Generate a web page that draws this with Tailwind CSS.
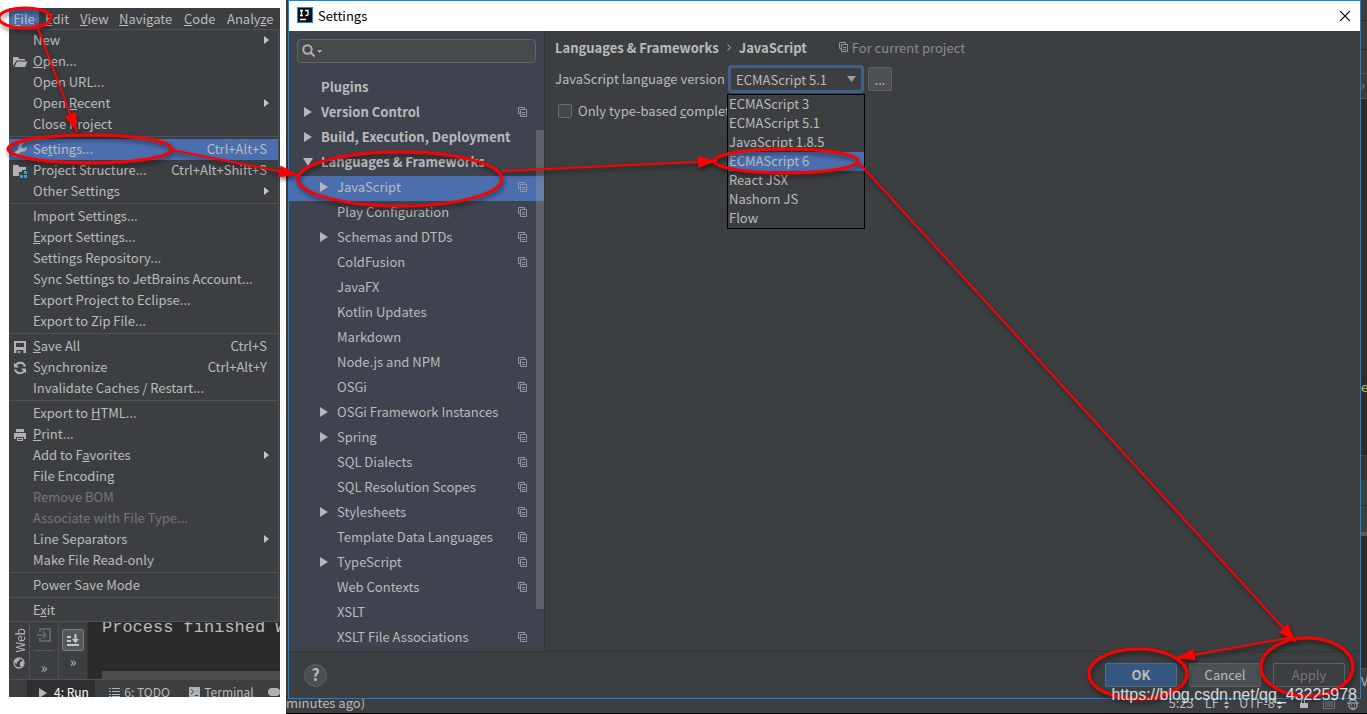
<!DOCTYPE html>
<html lang="en">
<head>
<meta charset="utf-8">
<title>Settings</title>
<script src="https://cdn.jsdelivr.net/npm/@tailwindcss/browser@4"></script>
</head>
<body class="relative flex min-h-screen overflow-hidden bg-white font-['Noto_Sans_CJK_SC','Noto_Sans',sans-serif] text-[13px] leading-[21px] text-[#bbbbbb]">

<svg class="hidden" aria-hidden="true">
  <symbol id="folder" viewBox="0 0 16 16"><path fill="#afb1b3" d="M1 12V3h5l1.500 2H13v1.500H4.500zM2.500 13L5 7.500h10.500L13 13z"/></symbol>
  <symbol id="wrench" viewBox="0 0 16 16"><path fill="#afb1b3" d="M14.500 4.200l-2.300 2.200-2.300-.4-.5-2.300 2.300-2.200a4.200 4.200 0 0 0-5.300 5.400L1.300 12a1.800 1.800 0 0 0 2.600 2.600l5.200-5.100a4.200 4.200 0 0 0 5.400-5.300z"/></symbol>
  <symbol id="structure" viewBox="0 0 16 16"><path fill="#afb1b3" d="M1 13V2h5l1.500 2H14v3H10v2H7v4z"/><path fill="#389fd6" d="M12 8h3v3h-3zM8 12h3v3H8zM12 12h3v3h-3z"/></symbol>
  <symbol id="save" viewBox="0 0 16 16"><path fill="#afb1b3" fill-rule="evenodd" d="M2 2h12v12h-2.500v-3h-7v3H2zM4 4v4h8V4zM6 12h2v2H6z"/></symbol>
  <symbol id="sync" viewBox="0 0 16 16"><path fill="none" stroke="#afb1b3" stroke-width="2" d="M3.500 6A5 5 0 0 1 13 6.500M12.500 10A5 5 0 0 1 3 9.500"/><path fill="#afb1b3" d="M2 2.500V7.500h5zM14 13.500V8.500H9z"/></symbol>
  <symbol id="print" viewBox="0 0 16 16"><path fill="#afb1b3" fill-rule="evenodd" d="M4 2h8v3H4zM2 6h12v6h-2v-2H4v2H2zM5 11h6v3H5zm1 1v1h4v-1z"/></symbol>
  <symbol id="copy" viewBox="0 0 10 10"><path fill="none" stroke="#8f979f" d="M2.500 6.500h-2v-6h6v2M2.500 2.500h6v7h-6zM4 5.500h3M4 7.500h3"/></symbol>
  <symbol id="right" viewBox="0 0 8 10"><path fill="#b4b6b8" d="M0 0l8 5-8 5z"/></symbol>
  <symbol id="down" viewBox="0 0 10 8"><path fill="#b4b6b8" d="M0 0h10L5 8z"/></symbol>
</svg>

<!-- IDE window with the File menu open -->
<section class="flex w-[286px] shrink-0 flex-col pt-2 pl-[9px]">
  <div class="w-[271px] overflow-hidden bg-[#3c3f41]">
    <nav class="flex h-[21px] whitespace-nowrap" aria-label="Main menu">
      <button class="w-[30px] bg-[#4b6eaf] pb-0.5 text-center"><u>F</u>ile</button>
      <button class="w-10 pb-0.5 pl-1.5 text-left"><u>E</u>dit</button>
      <button class="w-10 pb-0.5 pl-px text-left"><u>V</u>iew</button>
      <button class="w-[65px] pb-0.5 text-left"><u>N</u>avigate</button>
      <button class="w-[43px] pb-0.5 text-left"><u>C</u>ode</button>
      <button class="pb-0.5 text-left">Analy<u>z</u>e</button>
    </nav>
    <div id="menu" role="menu" class="mr-px border-y border-r border-[#515151]"></div>
    <div class="flex h-[57px] overflow-hidden">
      <div class="flex w-[21px] flex-col items-center justify-between border-r border-[#515151] pt-1.5 pb-2.5 text-xs">
        <span class="rotate-180 leading-[21px] [writing-mode:vertical-rl]">Web</span>
        <svg class="size-3 shrink-0" viewBox="0 0 12 12"><circle cx="6" cy="6" r="5" fill="none" stroke="#afb1b3" stroke-width="1.300"/><path fill="#afb1b3" d="M2 3l3-2 2 1-1 2-2 1v2L2 6zM7 5l3-1 1 2-2 4-2-1z"/></svg>
      </div>
      <div class="flex w-[29px] flex-col items-center border-r border-[#515151] pt-1.5">
        <svg class="size-[14px] shrink-0" viewBox="0 0 14 14"><path fill="none" stroke="#606365" stroke-width="2" d="M3 4V1h10v12H3v-3M0 7h8M6 3.500L9 7l-3 3.500"/></svg>
        <span class="mt-2 h-px w-5 shrink-0 bg-[#555758]"></span>
        <span class="mt-1.5 text-sm">»</span>
      </div>
      <div class="flex w-[29px] flex-col items-center border-r border-[#333] pt-[7px]">
        <button aria-label="Scroll to end" class="grid size-[22px] shrink-0 place-items-center rounded-xs border border-[#7a7c7e] bg-[#53585a]">
          <svg class="size-3" viewBox="0 0 12 12"><path fill="none" stroke="#c5c7c8" stroke-width="2" d="M0 3h4M0 7h4M0 11h12M8.500 0v6"/><path fill="#c5c7c8" d="M5 5h7L8.500 9z"/></svg>
        </button>
        <span class="text-sm">»</span>
      </div>
      <div class="flex flex-1 flex-col justify-between overflow-hidden bg-[#2b2b2b] pl-3.5 font-['Liberation_Mono',monospace] text-[17px] leading-3 whitespace-nowrap">
        <span>Process finished w</span>
        <span class="h-2 bg-[#4d4d4d]"></span>
      </div>
    </div>
    <div class="flex h-[18px] items-start overflow-hidden border-t border-[#515151] pl-[18px] text-xs leading-6 whitespace-nowrap">
      <button class="flex h-5 w-[70px] items-start gap-[7px] bg-[#2d2f30] pl-3 text-white"><svg class="mt-2 h-[10px] w-2"><use href="#right"/></svg><span><u>4</u>: Run</span></button>
      <button class="flex h-5 w-[84px] items-start gap-1 pl-3.5"><svg class="mt-2 h-[9px] w-[11px]" viewBox="0 0 11 9"><path stroke="#afb1b3" d="M0 .5h2M3 .5h8M0 3.500h2M3 3.500h8M0 6.500h2M3 6.500h8M0 8.500h2M3 8.500h8"/></svg><span><u>6</u>: TODO</span></button>
      <button class="flex h-5 w-[79px] items-start gap-1 pl-3"><svg class="mt-[7px] size-[11px]" viewBox="0 0 11 11"><path fill="#afb1b3" d="M0 0h11v11H0z"/><path fill="none" stroke="#3c3f41" d="M2 2l2.500 2.500L2 7M6 8.500h3"/></svg><span>Terminal</span></button>
      <span class="mt-2 ml-3.5 h-2 w-3 rounded-full bg-[#afb1b3]"></span>
    </div>
  </div>
</section>

<!-- Settings dialog on top of the editor -->
<main class="flex min-w-0 flex-1 flex-col bg-[#2b2b2b]">
  <div class="flex flex-1">
    <div class="w-0.5 shrink-0 bg-[#35383a]"></div>
    <div class="flex min-w-0 flex-1 flex-col border border-[#1883d7] bg-[#3c3f41]">
      <header class="flex h-[30px] items-center bg-white pr-2.5 pl-2 text-black">
        <svg class="mb-0.5 size-4" viewBox="0 0 16 16"><rect width="16" height="16" fill="#1b8fe0"/><rect x="1" y="1" width="14" height="14" fill="#101014"/><path fill="none" stroke="#fff" stroke-width="1.300" d="M3 3.500h3M4.500 3.500v5M3 8.500h3M8 3.500h3v4q0 1-2.500 1M3 12.500h6"/></svg>
        <h1 class="ml-[5px] pb-0.5 text-[13px]">Settings</h1>
        <button class="ml-auto" aria-label="Close"><svg class="size-[10px]" viewBox="0 0 10 10"><path stroke="#000" stroke-width="1.200" d="M0 0l10 10M10 0L0 10"/></svg></button>
      </header>
      <div class="flex flex-1">
        <aside class="relative w-[256px] shrink-0 border-r border-[#333638] bg-[#3f434d]">
          <label class="mx-2 mt-2 flex h-6 w-[239px] items-center gap-px rounded border border-[#646464] bg-[#45494a] pl-1">
            <svg class="size-[14px]" viewBox="0 0 14 14"><circle cx="5.500" cy="5.500" r="4.200" fill="none" stroke="#afb1b3" stroke-width="2"/><path stroke="#afb1b3" stroke-width="2.200" d="M8.500 8.500l4 4"/></svg>
            <svg class="h-[3px] w-[5px]" viewBox="0 0 5 3"><path fill="#afb1b3" d="M0 0h5L2.500 3z"/></svg>
            <input type="text" aria-label="Search settings" class="min-w-0 flex-1 bg-transparent outline-none">
          </label>
          <ul id="tree" role="tree" class="mt-[13px] leading-[21px]"></ul>
          <div class="absolute top-[99px] right-0 h-[479px] w-2 bg-[#a6a6a6]/30"></div>
        </aside>
        <section class="min-w-0 flex-1 px-2.5 pt-[5px]">
          <div class="flex h-[22px] items-center whitespace-nowrap">
            <h2 class="font-bold">Languages &amp; Frameworks</h2>
            <svg class="mx-2 h-[7px] w-1" viewBox="0 0 4 7"><path fill="none" stroke="#bbb" d="M.5.5l3 3-3 3"/></svg>
            <h2 class="font-bold">JavaScript</h2>
            <svg class="mr-[3px] ml-8 size-[10px]"><use href="#copy"/></svg>
            <span class="text-[#8a8c8e]">For current project</span>
          </div>
          <div class="mt-[7px] flex h-7 items-center">
            <label for="version" class="w-[173px] pb-0.5 whitespace-nowrap">JavaScript language version</label>
            <div class="relative">
              <select id="version" class="block h-7 w-[136px] appearance-none rounded border-[3px] border-[#3d6185] bg-[#3c3f41] pl-[5px] outline-none">
                <option>ECMAScript 5.1</option>
              </select>
              <svg class="pointer-events-none absolute top-[11px] right-2 h-[6px] w-[9px]" viewBox="0 0 10 8" preserveAspectRatio="none"><path fill="#9a9da0" d="M0 0h10L5 8z"/></svg>
              <ul role="listbox" class="absolute top-[29px] -left-px z-10 w-[138px] border border-black bg-[#3c3f41] pl-px leading-[17px]">
                <li role="option" class="pb-0.5">ECMAScript 3</li>
                <li role="option" class="pb-0.5">ECMAScript 5.1</li>
                <li role="option" class="pb-0.5">JavaScript 1.8.5</li>
                <li role="option" aria-selected="true" class="-ml-px bg-[#4b6eaf] pb-0.5 pl-px">ECMAScript 6</li>
                <li role="option" class="pb-0.5">React JSX</li>
                <li role="option" class="pb-0.5">Nashorn JS</li>
                <li role="option" class="pb-0.5">Flow</li>
              </ul>
            </div>
            <button class="ml-1 h-6 w-6 rounded-xs border border-[#5e6060] bg-[#4c5052]">...</button>
          </div>
          <label class="mt-1.5 flex h-6 items-center gap-1.5 pl-[3px] whitespace-nowrap">
            <input type="checkbox" class="size-[14px] appearance-none rounded-xs border border-[#6b6b6b] bg-[#43494a]">
            <span class="pb-0.5">Only type-based <u>c</u>ompletion</span>
          </label>
        </section>
      </div>
      <footer class="flex h-[47px] items-center border-t border-[#323435] px-[15px]">
        <button class="grid size-[23px] place-items-center rounded-full border border-[#5e6060] bg-[#4c5052] pb-0.5 text-base leading-[19px] font-bold" aria-label="Help">?</button>
        <div class="ml-auto flex gap-3">
          <button class="h-6 w-[72px] rounded-xs border border-[#4c708c] bg-[#365880] pb-0.5 font-bold">OK</button>
          <button class="h-6 w-[72px] rounded-xs border border-[#5e6060] bg-[#4c5052] pb-0.5">Cancel</button>
          <button disabled class="h-6 w-[72px] rounded-xs border border-[#5e6060] pb-0.5 text-[#777777]">Apply</button>
        </div>
      </footer>
    </div>
    <div class="flex w-1.5 shrink-0 flex-col overflow-hidden">
      <div class="h-5 bg-[#3c3f41]"></div>
      <div class="h-[29px] border-t border-[#2b2b2b] bg-[#3c3f41]"></div>
      <div class="h-6 border-t border-[#2b2b2b] bg-[#3c3f41]"></div>
      <div class="h-[26px] border-y border-[#555] bg-[#3c3f41] text-[#888]">›</div>
      <div class="h-[100px]"></div>
      <div class="h-[178px] bg-[#303132]"></div>
      <div class="h-[78px] leading-[19px] text-[#a5c261]">e</div>
      <div class="h-[25px] border-t border-[#444] bg-[#343536]"></div>
      <div class="h-[25px] bg-[#3b4147]"></div>
      <div class="h-[27px] border-t border-[#2b2b2b] bg-[#3b4147]"></div>
      <div class="h-1 bg-[#595959]"></div>
      <div class="h-[132px]"></div>
      <div class="flex-1 border-t border-[#515151] bg-[#3c3f41] pt-1 text-xs">Ve</div>
    </div>
  </div>
  <div class="flex h-[15px] shrink-0 overflow-hidden border-b border-black bg-[#3c3f41] pr-1 leading-[7px] whitespace-nowrap">
    <span>minutes ago)</span>
    <span class="mr-[11px] ml-auto">5:23</span>
    <span>LF</span>
    <svg class="mt-0.5 mr-2.5 ml-[5px] h-2 w-[5px]" viewBox="0 0 5 8"><path fill="#bbb" d="M0 3h5L2.500 0zM0 5h5L2.500 8z"/></svg>
    <span>UTF-8</span>
    <svg class="mt-0.5 mr-[18px] ml-0.5 h-2 w-[5px]" viewBox="0 0 5 8"><path fill="#bbb" d="M0 3h5L2.500 0zM0 5h5L2.500 8z"/></svg>
    <svg class="mr-[15px] h-[9px] w-2" viewBox="0 0 8 9"><path fill="#bbb" d="M0 4h8v5H0z"/><path fill="none" stroke="#bbb" d="M1.500 4V1h3v3"/></svg>
    <svg class="mr-3 h-[10px] w-3" viewBox="0 0 12 10"><path fill="none" stroke="#6e7072" d="M.5.5h11v9H.5zM2 3h8M2 5h8M2 7h8"/></svg>
    <svg class="mr-1 h-3 w-3" viewBox="0 0 12 12"><path fill="none" stroke="#afb1b3" d="M3 4V1h6v3M0 4h12M2 4v4q4 5 8 0V4M4 6h1M7 6h1M4 9h4"/></svg>
  </div>
</main>

<!-- Annotations -->
<svg class="pointer-events-none absolute top-0 left-0 z-20 h-[714px] w-[1367px] drop-shadow-[1px_3px_2px_rgba(0,0,0,0.5)]" viewBox="0 0 1367 714" fill="none" stroke="#f00" stroke-width="3" aria-hidden="true">
  <defs><marker id="head" markerUnits="userSpaceOnUse" markerWidth="20" markerHeight="14" refX="19" refY="7" orient="auto"><path d="M0 1l19 6-19 6z" fill="#f00" stroke="none"/></marker></defs>
  <ellipse cx="25" cy="18" rx="26" ry="10"/>
  <ellipse cx="90" cy="149" rx="82" ry="14"/>
  <ellipse cx="400" cy="179" rx="102" ry="27"/>
  <ellipse cx="786" cy="161" rx="72" ry="12"/>
  <ellipse cx="1138" cy="674" rx="49" ry="25"/>
  <ellipse cx="1307" cy="667" rx="46" ry="29"/>
  <g stroke-width="2">
    <path marker-end="url(#head)" d="M36 23L77 132"/>
    <path marker-end="url(#head)" d="M172 150L298 175"/>
    <path marker-end="url(#head)" d="M502 171L717 161"/>
    <path marker-end="url(#head)" d="M859 163L1296 642"/>
    <path marker-end="url(#head)" d="M1294 637L1176 658"/>
  </g>
</svg>
<div class="absolute right-2.5 bottom-[9px] z-30 font-['Liberation_Sans',sans-serif] text-base leading-5 text-white/80">https://blog.csdn.net/qq_43225978</div>

<script>
// Menu entries: [label, icon, shortcut, flags]; null is a separator, ">" opens a submenu.
const menu = [
  ['New','','','>'],['<u>O</u>pen...','folder'],['Open URL...'],['Open <u>R</u>ecent','','','>'],['Close Pro<u>j</u>ect'],null,
  ['Se<u>t</u>tings...','wrench','Ctrl+Alt+S','sel'],['Project Structure...','structure','Ctrl+Alt+Shift+S'],['Other Settings','','','>'],null,
  ['Import Settings...'],['<u>E</u>xport Settings...'],['Settings Repository...'],['Sync Settings to JetBrains Account...'],['Export Project to Eclipse...'],['Export to Zip File...'],null,
  ['<u>S</u>ave All','save','Ctrl+S'],['S<u>y</u>nchronize','sync','Ctrl+Alt+Y'],['Invalidate Caches / Restart...'],null,
  ['Export to <u>H</u>TML...'],['<u>P</u>rint...','print'],['Add to F<u>a</u>vorites','','','>'],['File Encoding'],['Remove BOM','','','off'],['Associate with File Type...','','','off'],['Line Separators','','','>'],['Make File Read-only'],null,
  ['Power Save Mode'],null,['E<u>x</u>it']
];
document.getElementById('menu').innerHTML = menu.map(m => {
  if (!m) return '<div class="h-1 pt-px"><div class="h-px bg-[#515151]"></div></div>';
  const [label, icon, keys, flag] = m;
  const tone = flag === 'sel' ? 'bg-[#4b6eaf]' : flag === 'off' ? 'text-[#777777]' : '';
  return `<button role="menuitem" class="flex h-[21px] w-full items-center pr-[11px] pl-[3px] leading-[19px] whitespace-nowrap ${tone}">
    <span class="w-[21px] shrink-0">${icon ? `<svg class="size-4"><use href="#${icon}"/></svg>` : ''}</span>
    <span class="pb-0.5">${label}</span><span class="ml-auto pb-0.5">${keys || ''}</span>
    ${flag === '>' ? '<svg class="-mr-0.5 mb-0.5 h-2 w-[5px]" viewBox="0 0 5 8"><path fill="#c4c6c8" d="M0 0l5 4-5 4z"/></svg>' : ''}</button>`;
}).join('');

// Tree rows: [label, level, arrow, project-level mark]
const tree = [
  ['Plugins',0,'',0],['Version Control',0,'right',1],['Build, Execution, Deployment',0,'right',0],['Languages &amp; Frameworks',0,'down',0],
  ['JavaScript',1,'right',1],['Play Configuration',1,'',1],['Schemas and DTDs',1,'right',1],['ColdFusion',1,'',1],['JavaFX',1,'',0],['Kotlin Updates',1,'',0],
  ['Markdown',1,'',0],['Node.js and NPM',1,'',1],['OSGi',1,'',1],['OSGi Framework Instances',1,'right',0],['Spring',1,'right',1],['SQL Dialects',1,'',1],
  ['SQL Resolution Scopes',1,'',1],['Stylesheets',1,'right',1],['Template Data Languages',1,'',1],['TypeScript',1,'right',1],['Web Contexts',1,'',1],['XSLT',1,'',0],['XSLT File Associations',1,'',1]
];
document.getElementById('tree').innerHTML = tree.map(([label, level, arrow, mark]) =>
  `<li role="treeitem" class="flex h-[25px] items-center pr-4 pb-[3px] whitespace-nowrap ${level ? 'pl-[30px]' : 'pl-3.5 font-bold'} ${label === 'JavaScript' ? 'bg-[#4b6eaf]' : ''}">
    <span class="w-[18px] shrink-0">${arrow ? `<svg class="${arrow === 'down' ? 'h-2 w-[10px]' : 'ml-px h-[10px] w-2'}"><use href="#${arrow}"/></svg>` : ''}</span>
    <span class="pb-px">${label}</span>${mark ? '<svg class="ml-auto size-[10px]"><use href="#copy"/></svg>' : ''}</li>`).join('');
</script>
</body>
</html>
